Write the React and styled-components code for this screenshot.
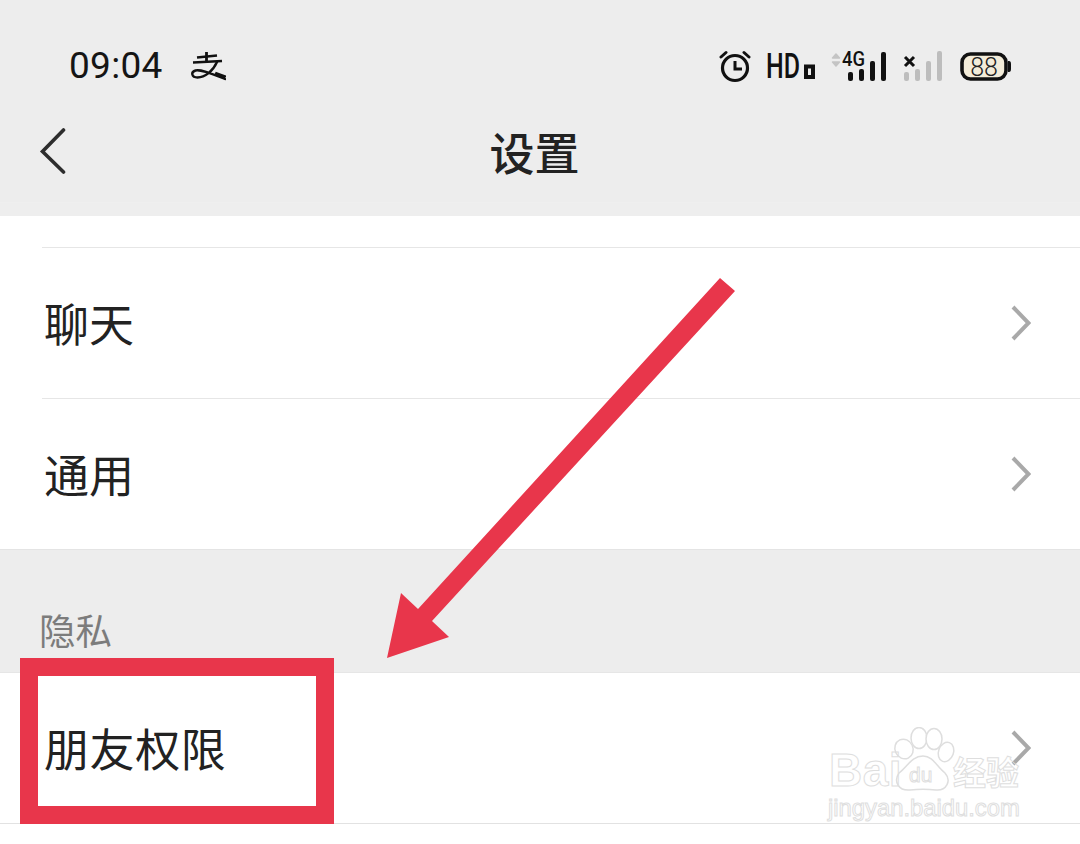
import React from 'react';
import styled, { createGlobalStyle } from 'styled-components';

const Global = createGlobalStyle`
  html, body { margin: 0; padding: 0; background: #fff; }
  body { font-family: "Noto Sans CJK SC", "Noto Sans", sans-serif; }
  * { box-sizing: border-box; }
`;

const Page = styled.div`
  position: relative;
  width: 1080px;
  height: 844px;
  overflow: hidden;
  background: #fff;
`;

const Header = styled.header`
  height: 216px;
  background: #ededed;
  display: flex;
  flex-direction: column;
`;

const StatusBar = styled.div`
  height: 106px;
  padding: 25px 68px 0 69px;
  display: flex;
  align-items: center;
`;

const Time = styled.span`
  font: 400 37px/40px Roboto, "Liberation Sans", sans-serif;
  letter-spacing: 0.3px;
  color: #151515;
  margin-right: 27px;
`;

const Spacer = styled.div`
  flex: 1;
`;

const StatusIcons = styled.div`
  display: flex;
  align-items: center;
`;

const NavBar = styled.div`
  position: relative;
  height: 86px;
  display: flex;
  align-items: flex-start;
  justify-content: center;
  padding-right: 11px;
`;

const BackIcon = styled.svg`
  position: absolute;
  left: 38px;
  top: 16px;
`;

const Title = styled.h1`
  margin: 14px 0 0;
  font: 500 45px/64px "Noto Sans CJK SC", sans-serif;
  color: #222;
`;

const HeaderBand = styled.div`
  height: 14px;
  background: #eeeeee;
  border-top: 1px solid #efefef;
`;

const Group = styled.section`
  background: #fff;
  padding-top: ${p => p.$top || 0}px;
`;

const Row = styled.div`
  height: ${p => p.$h || 151}px;
  margin-left: ${p => p.$inset ? 42 : 0}px;
  border-top: 1px solid #e6e6e6;
  display: flex;
  align-items: center;
  justify-content: space-between;
  padding: 0 49px 0 ${p => p.$inset ? 2 : 44}px;
`;

const RowLabel = styled.span`
  font: 400 45px/64px "Noto Sans CJK SC", sans-serif;
  letter-spacing: ${p => p.$spread || 0}px;
  color: #222;
`;

const Section = styled.div`
  height: 123px;
  background: #ededed;
  border-top: 1px solid #e4e4e4;
  padding: 54px 0 0 39px;
`;

const SectionLabel = styled.span`
  font: 400 36.5px/52px "Noto Sans CJK SC", sans-serif;
  color: #7c7c7c;
`;

const BottomLine = styled.div`
  border-top: 1px solid #e2e2e2;
`;

const AnnotationBox = styled.div`
  position: absolute;
  left: 20px;
  top: 658px;
  width: 314px;
  height: 166px;
  border: 18px solid #e8364b;
`;

const Arrow = styled.svg`
  position: absolute;
  left: 380px;
  top: 270px;
`;

const Watermark = styled.div`
  position: absolute;
  left: 826px;
  top: 726px;
  width: 200px;
  height: 98px;
  color: transparent;
  -webkit-text-stroke: 1px #dedede;
`;

const WmBai = styled.span`
  position: absolute;
  left: 3px;
  top: 20px;
  font: 700 46px/48px "Liberation Sans", sans-serif;
  letter-spacing: 0.5px;
`;

const WmJing = styled.span`
  position: absolute;
  left: 127px;
  top: 22px;
  font: 700 33px/46px "Noto Sans CJK SC", sans-serif;
`;

const WmUrl = styled.span`
  position: absolute;
  left: 2px;
  top: 68px;
  font: 400 23.8px/28px "Liberation Sans", sans-serif;
  white-space: nowrap;
`;

const WmPaw = styled.svg`
  position: absolute;
  left: 64px;
  top: 1px;
`;

const Alipay = () => (
  <svg width="36" height="30" viewBox="0 0 36 30" fill="none" stroke="#111">
    <path d="M7 6.5 L27 4.5" strokeWidth="2.6" />
    <path d="M16.5 1 V11" strokeWidth="2.8" />
    <path d="M3 11.5 L32 10" strokeWidth="2.4" />
    <path d="M27 11 C23 20 15 26.5 7.5 26.5 C1.5 26.5 0.5 21 5.5 19.5 C11 18 22 23 35 28" strokeWidth="2.4" strokeLinecap="round" />
    <path d="M25 22.5 L35.5 26.5" strokeWidth="4" />
  </svg>
);

const Alarm = () => (
  <svg width="32" height="34" viewBox="0 0 32 34" fill="none" stroke="#111" style={{ marginRight: 15 }}>
    <circle cx="16" cy="19" r="12.5" strokeWidth="3.2" />
    <path d="M16 12 V20 H23" strokeWidth="3" />
    <path d="M2 8 L7 3.5 M30 8 L25 3.5" strokeWidth="3" strokeLinecap="round" />
  </svg>
);

const HdIcon = () => (
  <svg width="52" height="34" viewBox="0 0 52 34" overflow="visible" style={{ marginRight: 12 }}>
    <text x="0" y="28.5" textLength="34" lengthAdjust="spacingAndGlyphs" fontFamily="Roboto, sans-serif" fontSize="35" fontWeight="500" fill="#111">HD</text>
    <rect x="40" y="17.5" width="7" height="10.5" fill="none" stroke="#111" strokeWidth="4" />
  </svg>
);

const Net = () => (
  <svg width="60" height="34" viewBox="0 0 60 34" overflow="visible" style={{ marginRight: 12 }}>
    <path d="M2.5 9 L6 5 L9.5 9 Z M2.5 13 L6 17 L9.5 13 Z" fill="#c4c4c4" stroke="#c4c4c4" strokeWidth="1.5" strokeLinejoin="round" />
    <text x="12" y="17" fontFamily="Roboto, sans-serif" fontSize="20" fontWeight="500" textLength="23" lengthAdjust="spacingAndGlyphs" fill="#111">4G</text>
    <g fill="#111">
      <rect x="18" y="23" width="5" height="9" rx="2" />
      <rect x="29" y="20" width="5" height="12" rx="2" />
      <rect x="40" y="12" width="5" height="20" rx="2" />
      <rect x="51" y="3" width="5" height="29" rx="2" />
    </g>
  </svg>
);

const NoSim = () => (
  <svg width="42" height="34" viewBox="0 0 42 34" style={{ marginRight: 16 }}>
    <path d="M3 8 L12 17 M12 8 L3 17" stroke="#111" strokeWidth="3" />
    <g fill="#bdbdbd">
      <rect x="2" y="23" width="5" height="9" rx="2" />
      <rect x="13" y="20" width="5" height="12" rx="2" />
      <rect x="24" y="12" width="5" height="20" rx="2" />
      <rect x="35" y="2" width="5" height="30" rx="2" />
    </g>
  </svg>
);

const Battery = () => (
  <svg width="52" height="34" viewBox="0 0 52 34">
    <rect x="2" y="5" width="44" height="25" rx="8.5" fill="#f3ecd9" stroke="#111" strokeWidth="3.6" />
    <path d="M48 12 H49 A2 3 0 0 1 51 15 V20 A2 3 0 0 1 49 23 H48 Z" fill="#111" />
    <text x="24" y="26.5" textAnchor="middle" fontFamily="Roboto, sans-serif" fontWeight="300" fontSize="25" fill="#222">88</text>
  </svg>
);

const Chevron = () => (
  <svg width="20" height="36" viewBox="0 0 20 36" fill="none" stroke="#a9a9a9" strokeWidth="4">
    <path d="M2 2 L17.5 18 L2 34" />
  </svg>
);

const rows = ['聊天', '通用'];

export default function App() {
  return (
    <Page>
      <Global />
      <Header>
        <StatusBar>
          <Time>09:04</Time>
          <Alipay />
          <Spacer />
          <StatusIcons>
            <Alarm />
            <HdIcon />
            <Net />
            <NoSim />
            <Battery />
          </StatusIcons>
        </StatusBar>
        <NavBar>
          <BackIcon width="32" height="52" viewBox="0 0 32 52" fill="none" stroke="#2d2d2d" strokeWidth="3.6" strokeLinecap="round" strokeLinejoin="miter">
            <path d="M25.5 8 L4.5 29.5 L25.5 50" />
          </BackIcon>
          <Title>设置</Title>
        </NavBar>
        <Spacer />
        <HeaderBand />
      </Header>
      <Group $top={31}>
        {rows.map(r => (
          <Row key={r} $inset>
            <RowLabel>{r}</RowLabel>
            <Chevron />
          </Row>
        ))}
      </Group>
      <Section>
        <SectionLabel>隐私</SectionLabel>
      </Section>
      <Group>
        <Row>
          <RowLabel $spread={0.6}>朋友权限</RowLabel>
          <Chevron />
        </Row>
        <BottomLine />
      </Group>
      <Watermark>
        <WmPaw width="66" height="66" viewBox="0 0 66 66" fill="#fff" stroke="#dedede" strokeWidth="1.5">
          <ellipse cx="14" cy="22" rx="9" ry="10" transform="rotate(-25 14 22)" />
          <ellipse cx="29" cy="11" rx="8" ry="10.5" />
          <ellipse cx="44" cy="12" rx="8" ry="10.5" />
          <ellipse cx="56" cy="25" rx="7.5" ry="10" transform="rotate(20 56 25)" />
          <path d="M33 29 C43 29 47 40 55 46 C62 54 56 64 46 63 C38 62 28 62 20 63 C9 64 3 55 9 46 C17 40 22 29 33 29 Z" />
          <text x="19" y="55" fontFamily="Liberation Sans, sans-serif" fontSize="21" fill="none" strokeWidth="1">du</text>
        </WmPaw>
        <WmBai>Bai</WmBai>
        <WmJing>经验</WmJing>
        <WmUrl>jingyan.baidu.com</WmUrl>
      </Watermark>
      <AnnotationBox />
      <Arrow width="360" height="395" viewBox="380 270 360 395">
        <polygon points="720,278 735,291 432,621 449,637 387,658 401,593 418,609" fill="#e8364b" />
      </Arrow>
    </Page>
  );
}
